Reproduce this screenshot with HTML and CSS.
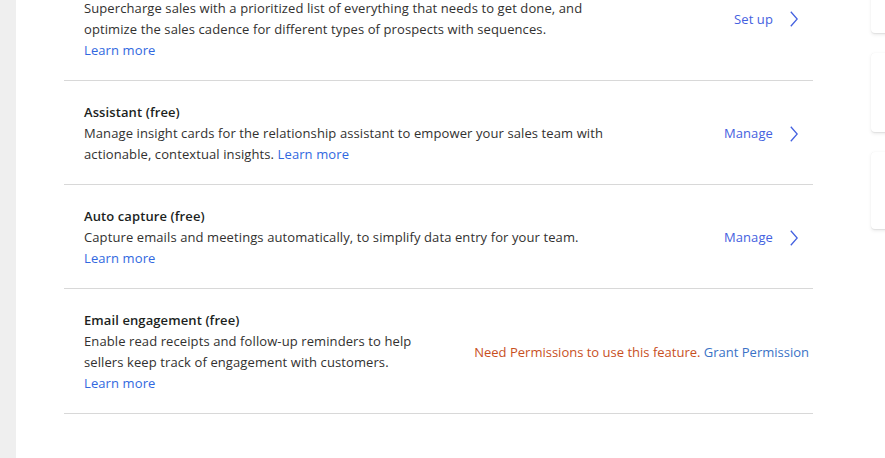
FILE: index.html
```html
<!DOCTYPE html>
<html lang="en"><head><meta charset="utf-8"><title>Sales features</title><link rel="stylesheet" href="styles.css"></head>
<body>
<div class="page">
  <aside class="strip"></aside>
  <main class="main">
    <section class="list">
      <div class="row">
        <div class="info">
          <div class="title">Sales accelerator</div>
          <div class="desc">Supercharge sales with a prioritized list of everything that needs to get done, and optimize the sales cadence for different types of prospects with sequences.</div>
          <a class="link block" href="#">Learn more</a>
        </div>
        <a class="action" href="#"><span>Set up</span><svg class="chev" viewBox="0 0 8 16" width="8" height="16"><path d="M0.8 0.8 L7.2 8 L0.8 15.2" fill="none" stroke="currentColor" stroke-width="1.3"/></svg></a>
      </div>
      <div class="row">
        <div class="info">
          <div class="title">Assistant (free)</div>
          <div class="desc">Manage insight cards for the relationship assistant to empower your sales team with actionable, contextual insights. <a class="link" href="#">Learn more</a></div>
        </div>
        <a class="action" href="#"><span>Manage</span><svg class="chev" viewBox="0 0 8 16" width="8" height="16"><path d="M0.8 0.8 L7.2 8 L0.8 15.2" fill="none" stroke="currentColor" stroke-width="1.3"/></svg></a>
      </div>
      <div class="row">
        <div class="info">
          <div class="title">Auto capture (free)</div>
          <div class="desc">Capture emails and meetings automatically, to simplify data entry for your team.</div>
          <a class="link block" href="#">Learn more</a>
        </div>
        <a class="action" href="#"><span>Manage</span><svg class="chev" viewBox="0 0 8 16" width="8" height="16"><path d="M0.8 0.8 L7.2 8 L0.8 15.2" fill="none" stroke="currentColor" stroke-width="1.3"/></svg></a>
      </div>
      <div class="row">
        <div class="info">
          <div class="title">Email engagement (free)</div>
          <div class="desc">Enable read receipts and follow-up reminders to help sellers keep track of engagement with customers.</div>
          <a class="link block" href="#">Learn more</a>
        </div>
        <div class="perm"><span class="warn">Need Permissions to use this feature.</span> <a class="grant" href="#">Grant Permission</a></div>
      </div>
    </section>
  </main>
  <aside class="side">
    <div class="card c1"></div>
    <div class="card c2"></div>
    <div class="card c3"></div>
  </aside>
</div>
</body></html>
```
FILE: styles.css
```css
html,body{margin:0;padding:0;height:100%;overflow:hidden;background:#fff;}
body{font-family:"Open Sans","Liberation Sans",sans-serif;font-size:13px;letter-spacing:0.1px;color:#323130;}
.page{display:flex;height:458px;width:885px;overflow:hidden;}
.strip{width:16px;flex-shrink:0;background:#efefef;}
.main{width:749px;flex-shrink:0;padding-left:48px;}
.list{margin-top:-44px;}
.row{display:flex;align-items:center;padding:21px 4px 19px 20px;border-bottom:1px solid #d8d8d8;line-height:21px;}
.info{flex:1;max-width:540px;}
.title{font-weight:600;color:#201f1e;}
.desc{color:#323130;}
.link{color:#3168e0;text-decoration:none;}
.link.block{display:block;width:max-content;}
.action{margin-left:auto;display:flex;align-items:center;gap:17px;color:#4461e0;text-decoration:none;padding-right:11px;}
.chev{display:block;}
.perm{margin-left:44px;flex-shrink:0;white-space:nowrap;letter-spacing:0;}
.warn{color:#c8501e;}
.grant{color:#3a72c6;text-decoration:none;}
.side{flex:1;min-width:0;overflow:hidden;padding-left:58px;display:flex;flex-direction:column;gap:20px;margin-top:-60px;padding-bottom:10px;}
.card{flex-shrink:0;margin-right:-10px;background:#fff;border-radius:4px;box-shadow:0 1.6px 3.6px rgba(0,0,0,.08),0 0.3px 0.9px rgba(0,0,0,.06);}
.c1{height:93px;}
.c2{height:79px;}
.c3{height:77px;}
```
